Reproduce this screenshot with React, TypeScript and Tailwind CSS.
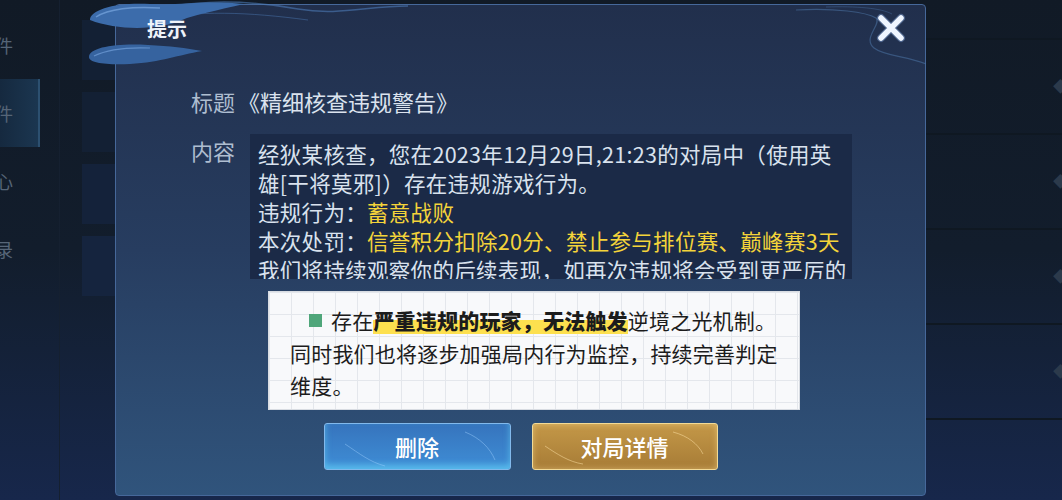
import React from "react";

const SideTab = ({ label, active }: { label: string; active?: boolean }) => (
  <div
    className={
      "h-[68px] flex items-center overflow-hidden " +
      (active ? "bg-linear-to-r from-[#15293f] to-[#1b3650] border-r-2 border-[#2c5070]" : "")
    }
  >
    <span className="-ml-[5px] text-[18px] text-[#566577]">{label}</span>
  </div>
);

const RightRow = () => (
  <div className="h-[95px] border-b-2 border-[#0f1822] flex items-center justify-end">
    <span className="text-[15px] text-[#2c3a4b] -mr-[6px]">◆</span>
  </div>
);

const CloseIcon = () => (
  <svg width="32" height="32" viewBox="0 0 32 32">
    <path d="M6 6 L26 26 M26 6 L6 26" stroke="#9cc3ff" strokeWidth="8" strokeLinecap="round" opacity="0.35" />
    <path d="M6 6 L26 26 M26 6 L6 26" stroke="#eef5ff" strokeWidth="5.5" strokeLinecap="round" />
  </svg>
);

const Clouds = () => (
  <svg width="320" height="72" viewBox="0 0 320 72" className="absolute -left-[28px] -top-[5px] pointer-events-none">
    <path d="M40 16 C 90 0, 150 -2, 210 9 C 250 16, 280 6, 320 6" stroke="#4d7cb8" strokeWidth="1.5" fill="none" opacity="0.6" />
    <path d="M60 20 C 110 10, 160 12, 220 20" stroke="#4d7cb8" strokeWidth="1" fill="none" opacity="0.45" />
    <path d="M2 20 C 2 9, 30 2, 62 4 C 92 6, 114 0, 156 4 C 130 10, 106 15, 94 20 C 72 30, 30 31, 2 20 Z" fill="#3c6cab" />
    <path d="M8 17 C 20 9, 45 6, 72 8" stroke="#72a0da" strokeWidth="1.5" fill="none" opacity="0.8" />
    <path d="M1 57 C 1 47, 30 43, 60 45 C 82 46, 98 48, 114 51 C 90 55, 74 62, 42 64 C 18 65, 1 63, 1 57 Z" fill="#36639f" />
    <path d="M6 56 C 18 50, 36 47, 62 48" stroke="#72a0da" strokeWidth="1.2" fill="none" opacity="0.7" />
  </svg>
);

const CornerSwirl = () => (
  <svg width="130" height="70" viewBox="0 0 130 70" className="absolute -right-[1px] -top-[1px] pointer-events-none">
    <path d="M0 6 C 40 4, 70 8, 80 14 C 86 20, 66 34, 78 44 C 88 52, 110 52, 130 60" stroke="#4c74a6" strokeWidth="1.2" fill="none" opacity="0.55" />
    <path d="M30 3 C 60 2, 85 4, 96 10" stroke="#4c74a6" strokeWidth="1" fill="none" opacity="0.4" />
  </svg>
);

export default function App() {
  return (
    <div className="relative w-[1062px] h-[500px] overflow-hidden bg-linear-to-b from-[#111a26] via-[#121d2c] to-[#17274b] font-['Noto_Sans_CJK_SC','Noto_Sans',sans-serif]">
      {/* background page */}
      <div className="flex h-full">
        <div className="w-[40px] flex flex-col pt-[11px]">
          <SideTab label="件" />
          <SideTab label="件" active />
          <SideTab label="心" />
          <SideTab label="录" />
        </div>
        <div className="flex-1 flex">
          <div className="w-[20px] border-r border-[#152030]" />
          <div className="w-[55px] flex flex-col gap-[12px] pt-[20px] pl-[22px]">
            <div className="h-[60px] bg-[#132034]" />
            <div className="h-[60px] bg-[#132034]" />
            <div className="h-[60px] bg-[#14223a]" />
            <div className="h-[60px] bg-[#15243e]" />
          </div>
          <div className="flex-1" />
        </div>
        <div className="w-[136px] flex flex-col">
          <div className="h-[40px] border-b-2 border-[#0f1822]" />
          <RightRow />
          <RightRow />
          <RightRow />
          <RightRow />
        </div>
      </div>

      {/* dialog */}
      <div className="absolute left-[115px] top-[4px] w-[811px] h-[492px] rounded-[4px] border border-[#46689a] bg-linear-to-b from-[#212f4c] via-[#273d60] to-[#30547c] flex flex-col">
        <Clouds />
        <CornerSwirl />
        <div className="relative h-[48px] flex items-center pl-[31px]">
          <span className="text-[20px] font-bold text-[#eef3fa]">提示</span>
        </div>
        <button className="absolute left-[759px] top-[7px]">
          <CloseIcon />
        </button>

        <div className="mt-[32px] flex pl-[75px] leading-[32px]">
          <span className="w-[59px] text-[22px] text-[#aebdd0]">标题</span>
          <span className="-ml-[12px] text-[22px] text-[#dbe3ee]">《精细核查违规警告》</span>
        </div>

        <div className="mt-[17px] flex pl-[75px]">
          <span className="w-[59px] text-[22px] leading-[32px] text-[#aebdd0]">内容</span>
          <div className="w-[602px] h-[145px] overflow-hidden bg-[#1b2a47] pl-[8px] pt-[5px] text-[21.5px] tracking-[0.3px] leading-[29px] text-[#d9e2ee] whitespace-nowrap">
            <div>经狄某核查，您在2023年12月29日,21:23的对局中（使用英</div>
            <div>雄[干将莫邪]）存在违规游戏行为。</div>
            <div>
              违规行为：<span className="text-[#f4d43a]">蓄意战败</span>
            </div>
            <div>
              本次处罚：<span className="text-[#f4d43a]">信誉积分扣除20分、禁止参与排位赛、巅峰赛3天</span>
            </div>
            <div>我们将持续观察你的后续表现，如再次违规将会受到更严厉的</div>
          </div>
        </div>

        {/* pasted note */}
        <div className="absolute left-[152px] top-[286px] w-[532px] h-[119px] bg-[#f8f9fb] bg-[linear-gradient(to_right,#e4e7ec_1px,transparent_1px),linear-gradient(to_bottom,#e4e7ec_1px,transparent_1px)] bg-[size:22px_22px] border border-[#d8dce2] pt-[12px] pl-[21px] text-[21px] tracking-[0.2px] leading-[32.5px] text-[#1c1c1c] whitespace-nowrap">
          <div className="pl-[19px] flex items-center">
            <span className="inline-block w-[13px] h-[13px] bg-[#4fa67a] mr-[9px]" />
            <span>存在</span>
            <span className="font-black bg-[linear-gradient(transparent_50%,#fde04f_50%,#fde04f_92%,transparent_92%)]">严重违规的玩家，无法触发</span>
            <span>逆境之光机制。</span>
          </div>
          <div>同时我们也将逐步加强局内行为监控，持续完善判定</div>
          <div>维度。</div>
        </div>

        <div className="mt-auto mb-[25px] flex justify-center gap-[21px]">
          <button className="relative w-[187px] h-[47px] rounded-[3px] border border-[#82b9ec] bg-linear-to-b from-[#3674bd] to-[#3f8ed6] shadow-[inset_0_-4px_6px_rgba(110,225,255,0.55)] text-[22px] font-medium text-white overflow-hidden">
            <svg width="187" height="47" viewBox="0 0 187 47" className="absolute left-0 top-0">
              <path d="M20 20 C 35 30, 45 38, 60 42" stroke="#9fd0ff" strokeWidth="1" fill="none" opacity="0.45" />
              <path d="M140 8 C 155 14, 165 24, 170 36" stroke="#9fd0ff" strokeWidth="1" fill="none" opacity="0.45" />
            </svg>
            <span className="relative">删除</span>
          </button>
          <button className="relative w-[186px] h-[47px] rounded-[3px] border border-[#f2da96] bg-linear-to-b from-[#c49848] to-[#a77c36] shadow-[inset_0_0_6px_rgba(255,225,150,0.5)] text-[22px] font-medium text-white overflow-hidden">
            <svg width="186" height="47" viewBox="0 0 186 47" className="absolute left-0 top-0">
              <path d="M12 22 C 24 30, 36 38, 50 40" stroke="#ffe3a8" strokeWidth="1" fill="none" opacity="0.5" />
              <path d="M140 8 C 155 12, 165 20, 170 30" stroke="#ffe3a8" strokeWidth="1" fill="none" opacity="0.5" />
            </svg>
            <span className="relative">对局详情</span>
          </button>
        </div>
      </div>
    </div>
  );
}
